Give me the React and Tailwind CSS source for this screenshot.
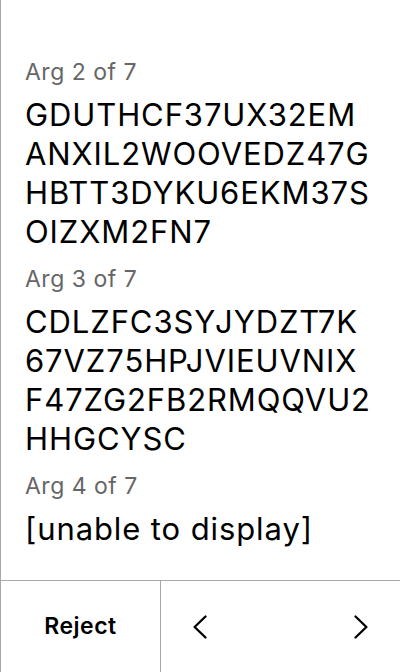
import React from "react";

const args = [
  {
    label: "Arg 2 of 7",
    lines: ["GDUTHCF37UX32EM", "ANXIL2WOOVEDZ47G", "HBTT3DYKU6EKM37S", "OIZXM2FN7"],
  },
  {
    label: "Arg 3 of 7",
    lines: ["CDLZFC3SYJYDZT7K", "67VZ75HPJVIEUVNIX", "F47ZG2FB2RMQQVU2", "HHGCYSC"],
  },
  { label: "Arg 4 of 7", lines: ["[unable to display]"] },
];

export default function App() {
  return (
    <div
      className="w-[400px] h-[672px] bg-white border-l border-[#a8a8a8] flex flex-col overflow-hidden"
      style={{ fontFamily: "Inter, 'Noto Sans', sans-serif" }}
    >
      <div className="flex-1 flex flex-col gap-[14px] pt-[58px] pl-[24px] pr-[16px]">
        {args.map((a) => (
          <div key={a.label} className="flex flex-col">
            <div className="text-[23px] leading-[28px] tracking-[0.5px] text-[#666666]">{a.label}</div>
            <div className="mt-[9px] flex flex-col">
              {a.lines.map((l) => (
                <div key={l} className="text-[31px] leading-[39px] tracking-[0.9px] text-black whitespace-nowrap">
                  {l}
                </div>
              ))}
            </div>
          </div>
        ))}
      </div>
      <div className="h-[92px] border-t border-[#a8a8a8] flex">
        <div className="w-[159px] flex items-center justify-center text-[23px] font-semibold tracking-[0.5px] text-black">
          Reject
        </div>
        <div className="flex-1 border-l border-[#a8a8a8] flex items-center justify-between pl-[32px] pr-[32px]">
          <svg width="14" height="24" viewBox="0 0 14 24" fill="none">
            <path d="M12.5 1.5 L1.6 12 L12.5 22.5" stroke="black" strokeWidth="2.3" strokeLinecap="round" strokeLinejoin="round" />
          </svg>
          <svg width="14" height="24" viewBox="0 0 14 24" fill="none">
            <path d="M1.5 1.5 L12.4 12 L1.5 22.5" stroke="black" strokeWidth="2.3" strokeLinecap="round" strokeLinejoin="round" />
          </svg>
        </div>
      </div>
    </div>
  );
}
